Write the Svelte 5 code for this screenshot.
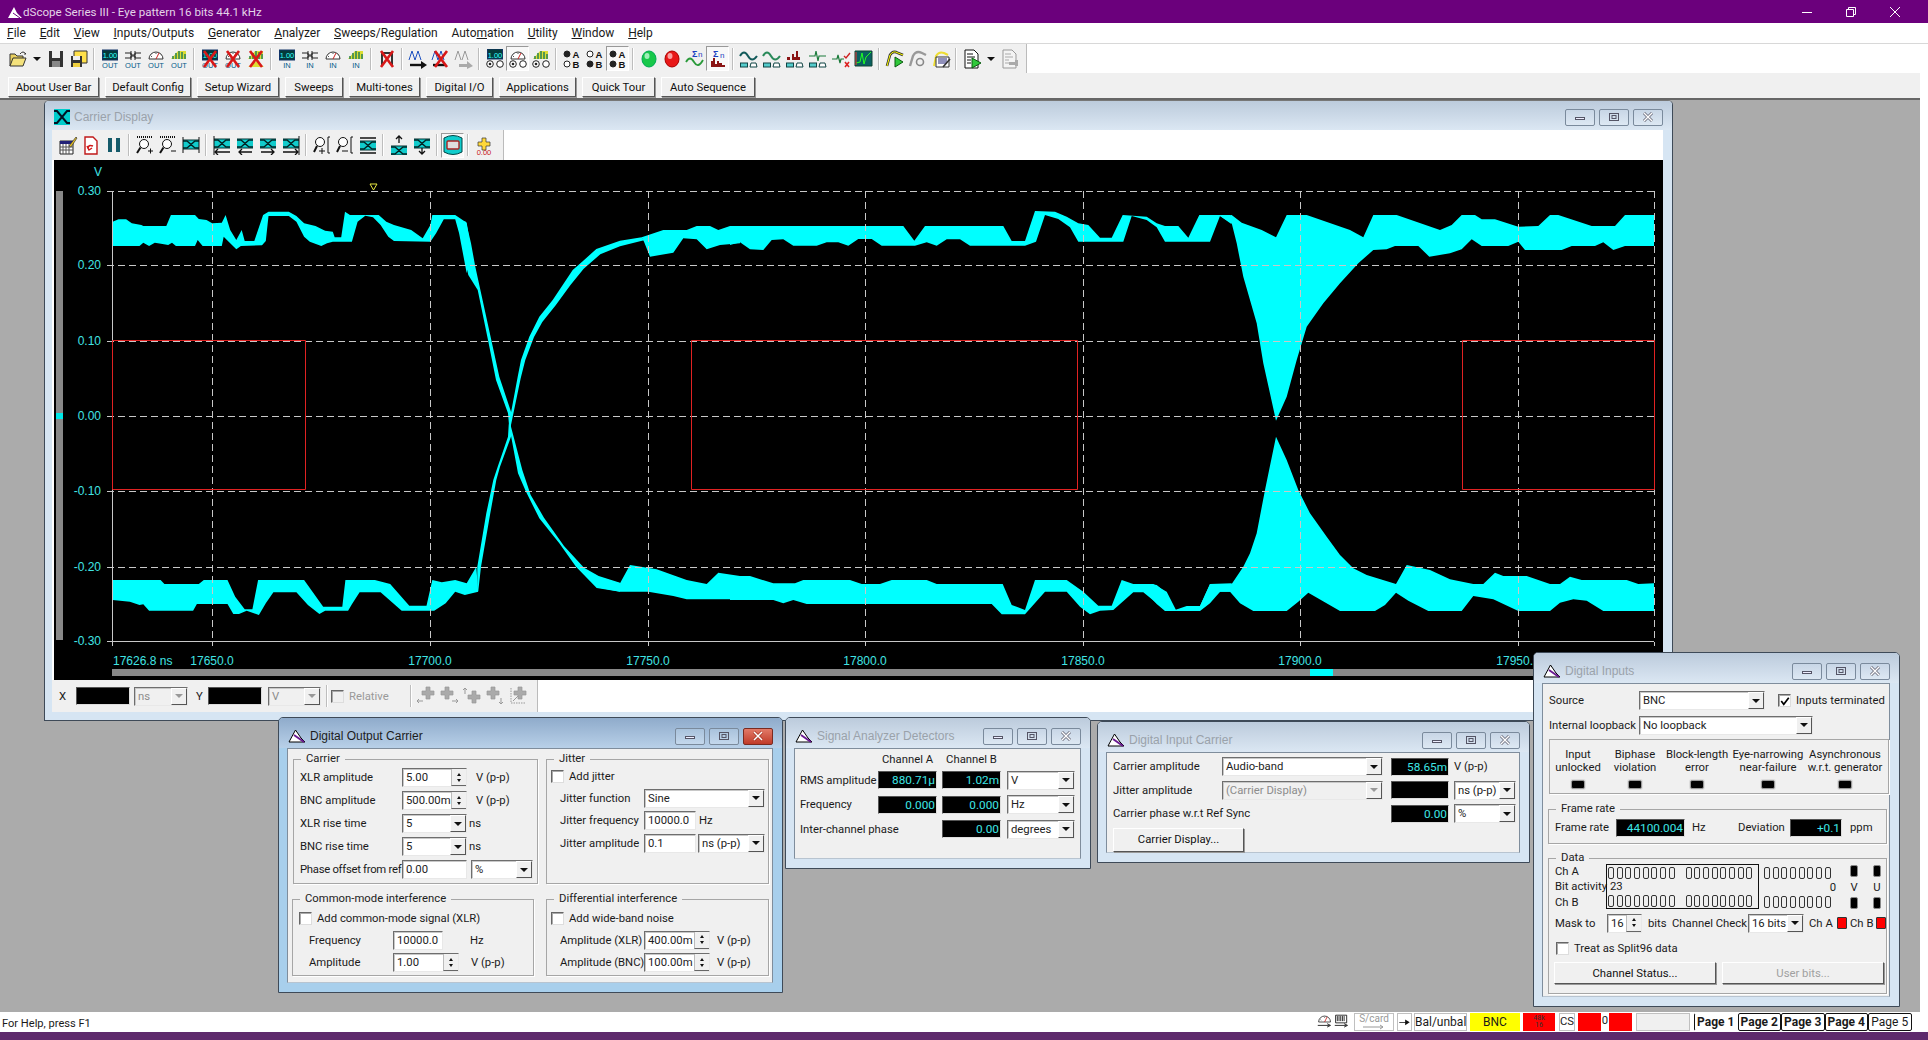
<script>
  const menus = [['F','ile'],['E','dit'],['V','iew'],['I','nputs/Outputs'],['G','enerator'],['A','nalyzer'],['S','weeps/Regulation'],['Auto','m','ation'],['U','tility'],['W','indow'],['H','elp']];
  const userBar = [['About User Bar','u91'],['Default Config','u86'],['Setup Wizard','u82'],['Sweeps','u58'],['Multi-tones','u71'],['Digital I/O','u67'],['Applications','u77'],['Quick Tour','u73'],['Auto Sequence','u94']];

  const F = 'font-family="Liberation Sans"';
  const lbl = (s, c = '#035a8a') => `<text x="10" y="19" font-size="7.5" text-anchor="middle" ${F} fill="${c}">${s}</text>`;
  const disp = `<rect x="2.5" y="1" width="15" height="10" fill="#043a3a" stroke="#136"/><text x="10" y="9" font-size="7.5" text-anchor="middle" ${F} fill="#3ff">1.00</text>`;
  const conn = `<path d="M2 4h6v2h4V4h6M2 9h6V7h4v2h6M8 2v9M12 2v9" fill="none" stroke="#222"/>`;
  const gauge = `<path d="M3 10a7 7 0 0 1 14 0z" fill="#fff" stroke="#333"/><path d="M10 10l3-6" stroke="#c22"/><path d="M5 7l1 1M10 4v1" stroke="#555"/>`;
  const multi = `<path d="M2 10L9 2l8 0v8z" fill="#dd3"/><path d="M4 10V7M7 10V4M10 10V2M13 10V3M16 10V5" stroke="#385" stroke-width="1.6"/>`;
  const X = `<path d="M4 2l12 16M16 2L4 18" stroke="#d81818" stroke-width="2.6"/>`;
  const circ = `<circle cx="5" cy="15" r="3.3" fill="#fff" stroke="#222"/><circle cx="15" cy="15" r="3.3" fill="#fff" stroke="#222"/><circle cx="5" cy="15" r="1.3" fill="#222"/>`;
  const wave = (c) => `<path d="M1 7q4-7 8 0t9 0" fill="none" stroke="${c}" stroke-width="2"/><rect x="1.5" y="14" width="7" height="4" fill="#5cc" stroke="#144"/><path d="M11 18l1-4h5l1 4z" fill="#fff" stroke="#144"/>`;
  const ab = (a, b) => `<circle cx="5" cy="5" r="3" fill="${a}" stroke="#222"/><circle cx="5" cy="15" r="3" fill="${b}" stroke="#222"/><text x="14" y="9" font-size="9.5" font-weight="700" text-anchor="middle" ${F} fill="#111">A</text><text x="14" y="19" font-size="9.5" font-weight="700" text-anchor="middle" ${F} fill="#111">B</text>`;
  const eye = `<path d="M2 4h16v9H2z" fill="#1cc"/><path d="M2 5h4l8 7h4M2 12h4l8-7h4" fill="none" stroke="#022" stroke-width="1.3"/><path d="M2 4h16M2 13h16" stroke="#033"/>`;
  const arrow = (d) => `<path d="${d}" fill="none" stroke="#111" stroke-width="1.3"/>`;
  const plus = (c) => `<path d="M8 3h4v4h4v4h-4v4H8v-4H4V7h4z" fill="${c}" stroke="${c === '#ffd83a' ? '#333' : '#999'}" stroke-width=".7"/>`;

  const ICON = {
    open: `<path d="M2 17V5h5l2 2h6v3" fill="#e8d060" stroke="#333"/><path d="M2 17l3-8h13l-3 8z" fill="#f4e27c" stroke="#333"/><path d="M12 5q3-4 6 0l-2 0" fill="none" stroke="#333"/>`,
    save: `<path d="M3 2h14v16H3z" fill="#333"/><path d="M6 2h8v7H6z" fill="#eee"/><path d="M6 12h8v6H6z" fill="#888"/>`,
    saveas: `<path d="M5 2h13v12H5z" fill="#ffe04a" stroke="#333"/><path d="M2 7h11v11H2z" fill="#333"/><path d="M4 7h7v4H4z" fill="#eee"/><path d="M4 14h7v4H4z" fill="#f0d040"/>`,
    o1: disp + lbl('OUT'), o2: conn + lbl('OUT'), o3: gauge + lbl('OUT'), o4: multi + lbl('OUT'),
    x1: disp + lbl('OUT') + X, x2: gauge + lbl('OUT') + X, x3: multi + `<path d="M2 18l9-6 7 6z" fill="#dd3"/>` + X,
    i1: disp + lbl('IN'), i2: conn + lbl('IN'), i3: gauge + lbl('IN'), i4: multi + lbl('IN'),
    xx: `<path d="M5 17V4h10v13" fill="none" stroke="#333" stroke-width="2"/>` + X,
    wa: `<path d="M1 11l3-9 3 9 3-9 3 9" fill="none" stroke="#1a4fc0"/><path d="M2 16h12" stroke="#111" stroke-width="2.4"/><path d="M13 12l6 4-6 4z" fill="#111"/>`,
    wx: `<path d="M1 11l3-9 3 9 3-9 3 9" fill="none" stroke="#1a4fc0"/><path d="M2 16h12" stroke="#111" stroke-width="2.4"/>` + X,
    wg: `<path d="M1 11l3-9 3 9M8 11l3-9 3 9" fill="none" stroke="#999"/><path d="M5 15h8v-3l6 5-6 3v-2H5z" fill="#aaa"/>`,
    c1: disp.replace('y="1"', 'y="0"') + circ, c2: gauge + circ, c3: multi + circ,
    ab1: ab('#222', '#fff'), ab2: ab('#fff', '#222'), ab3: ab('#222', '#222'),
    green: `<ellipse cx="10" cy="10" rx="7" ry="8" fill="#18c84a" stroke="#0a5"/><ellipse cx="8" cy="7" rx="2.5" ry="3" fill="#9fefb8"/>`,
    red: `<ellipse cx="10" cy="10" rx="7" ry="8" fill="#e81818" stroke="#a00"/><ellipse cx="8" cy="7" rx="2.5" ry="3" fill="#f9a0a0"/>`,
    sg: `<text x="7" y="8" font-size="9" font-weight="700" ${F} fill="#1a3fc0">Σ</text><path d="M1 13q4-7 8 0t9-2" fill="none" stroke="#2a9a3a" stroke-width="1.8"/><text x="13" y="8" font-size="8" ${F} fill="#1a3fc0">n</text>`,
    sb: `<text x="5" y="8" font-size="9" font-weight="700" ${F} fill="#1a3fc0">Σ</text><text x="12" y="9" font-size="8" ${F} fill="#1a3fc0">n</text><path d="M3 18V12h2v-3h2v6h2v-3h2v2h3v2h3v2z" fill="#8a1414"/>`,
    s1: wave('#125a5a'), s2: wave('#2a8a5a'),
    s3: `<path d="M2 11v-3h3v3h2V5h2v3h2V2h2v6h2v3h3" fill="#8a1414"/><rect x="1.5" y="14" width="7" height="4" fill="#5cc" stroke="#144"/><path d="M11 18l1-4h5l1 4z" fill="#fff" stroke="#144"/>`,
    s4: `<path d="M1 7h6l1-5 2 10 1-5h7" fill="none" stroke="#1a7a3a" stroke-width="1.2"/><rect x="1.5" y="14" width="7" height="4" fill="#5cc" stroke="#144"/><path d="M11 18l1-4h5l1 4z" fill="#fff" stroke="#144"/>`,
    s5: `<path d="M1 10h5l1-4 2 8 1-4h3" fill="none" stroke="#1a7a3a" stroke-width="1.2"/><path d="M13 7l2 2 4-5" fill="none" stroke="#c22" stroke-width="1.4"/><path d="M14 13l4 5M18 13l-4 5" stroke="#d22" stroke-width="1.6"/>`,
    scope: `<path d="M1 2h17v15H1z" fill="#0a6060" stroke="#143"/><path d="M2 14l4-1 2-9 2 11 2-7 5-5" fill="none" stroke="#2f2" /><path d="M2 3v13" stroke="#e33"/>`,
    play: `<path d="M2 17l3-11q3-5 8-2l5 2" fill="none" stroke="#333" stroke-width="2.6"/><path d="M2 17l3-11q3-5 8-2l5 2" fill="none" stroke="#ff0" stroke-width="1"/><path d="M10 8l8 5-8 5z" fill="#2fc83a" stroke="#0a5a10"/>`,
    rec: `<path d="M2 17l3-10q3-6 9-3l4 2" fill="none" stroke="#999" stroke-width="2.4"/><circle cx="12" cy="13" r="3.5" fill="none" stroke="#888" stroke-width="1.6"/>`,
    edit: `<path d="M3 17l2-10q3-5 8-3l4 2" fill="none" stroke="#ed3" stroke-width="2"/><path d="M5 8h13v10H5z" fill="#fff" stroke="#333"/><path d="M7 10h9M7 12h9M7 14h9" stroke="#227"/><path d="M12 18l7-8" stroke="#333" stroke-width="1.6"/>`,
    doc: `<path d="M3 1h9l4 4v14H3z" fill="#fff" stroke="#111"/><path d="M5 5h6M5 8h8M5 11h4M5 14h4" stroke="#111"/><path d="M10 9l9 5-9 5z" fill="#2fc83a" stroke="#0a5a10"/>`,
    docg: `<path d="M3 1h9l4 4v14H3z" fill="#f4f4f4" stroke="#999"/><path d="M5 5h6M5 8h8M5 11h4M5 14h4" stroke="#aaa"/><path d="M9 13h6v-2h3v6h-3v-1H9z" fill="#aaa"/>`,
    table: `<path d="M2 6h13v13H2z" fill="#fff" stroke="#222"/><path d="M2 6h13v3H2z" fill="#227"/><path d="M5 9v10M8 9v10M11 9v10M2 12h13M2 15h13" stroke="#555"/><path d="M11 11l7-9 1 1-6 9z" fill="#e7c020" stroke="#333" stroke-width=".7"/>`,
    rdoc: `<path d="M4 2h8l4 4v13H4z" fill="#fff" stroke="#c01818" stroke-width="1.4"/><path d="M7 14q0-5 5-3M6 11l2 4 3-2" fill="none" stroke="#d01818" stroke-width="1.5"/>`,
    pause: `<path d="M4 3h4v14H4zM12 3h4v14h-4z" fill="#155a6a"/>`,
    zi: `<path d="M2 2h16" stroke="#111" stroke-dasharray="1 1" stroke-width="2"/><circle cx="9" cy="9" r="4.5" fill="#fff" stroke="#111"/><path d="M5.5 12.5L2 18" stroke="#111" stroke-width="2"/><path d="M13 16h5M15.5 13.5v5" stroke="#111"/>`,
    zo: `<path d="M2 2h16" stroke="#111" stroke-dasharray="1 1" stroke-width="2"/><circle cx="9" cy="9" r="4.5" fill="#fff" stroke="#111"/><path d="M5.5 12.5L2 18" stroke="#111" stroke-width="2"/><path d="M13 16h5" stroke="#111"/>`,
    ebar: `<g transform="translate(0 1)">${eye}</g><path d="M2 2v16M18 2v16" stroke="#111"/>`,
    el2: eye + arrow('M18 17H3M6 14l-3 3 3 3') + `<path d="M2 1v19" stroke="#111"/>`,
    el: eye + arrow('M17 17H4M7 14l-3 3 3 3'),
    er: eye + arrow('M3 17h13M13 14l3 3-3 3'),
    er2: eye + arrow('M2 17h15M14 14l3 3-3 3') + `<path d="M18 1v19" stroke="#111"/>`,
    mp: `<circle cx="8" cy="7" r="4.5" fill="#fff" stroke="#111"/><path d="M5 11l-3 6" stroke="#111" stroke-width="2"/><path d="M7 16h6M10 13v6" stroke="#111"/><path d="M18 2h-2v16h2" fill="none" stroke="#111"/>`,
    mm: `<circle cx="8" cy="7" r="4.5" fill="#fff" stroke="#111"/><path d="M5 11l-3 6" stroke="#111" stroke-width="2"/><path d="M7 16h6" stroke="#111"/><path d="M18 2h-2v16h2" fill="none" stroke="#111"/>`,
    eh: `<g transform="translate(0 2)">${eye}</g><path d="M2 3h16M2 18h16" stroke="#111" stroke-width="1.4"/>`,
    eu: `<g transform="translate(0 7)">${eye}</g>` + arrow('M10 8V1M7 4l3-3 3 3'),
    ed: eye + arrow('M10 13v6M7 16l3 3 3-3'),
    ebox: `<path d="M1 3q9-5 18 0v14q-9 5-18 0z" fill="#1cc" stroke="#044"/><rect x="4" y="6" width="12" height="8" rx="1" fill="#ddd" stroke="#a22" stroke-width="1.4"/>`,
    cross: plus('#ffd83a') + `<text x="10" y="19.5" font-size="7.5" text-anchor="middle" ${F} fill="#c81818">0.00</text>`,
    g1: `<g transform="translate(2 -2)">${plus('#aaa')}</g><path d="M1 15h6M3 13l-2 2 2 2" fill="none" stroke="#999"/>`,
    g2: `<g transform="translate(-2 -2)">${plus('#aaa')}</g><path d="M13 15h6M17 13l2 2-2 2" fill="none" stroke="#999"/>`,
    g3: `<g transform="translate(2 2)">${plus('#aaa')}</g><path d="M3 8V2M1 4l2-2 2 2" fill="none" stroke="#999"/>`,
    g4: `<g transform="translate(-2 -2)">${plus('#aaa')}</g><path d="M16 12v6M14 16l2 2 2-2" fill="none" stroke="#999"/>`,
    g5: `<g transform="translate(2 -2)">${plus('#aaa')}</g><path d="M3 2v15h15" fill="none" stroke="#999" stroke-dasharray="1.5 1"/><path d="M5 15l5-5" stroke="#999"/>`,
    tg: gauge + `<path d="M2 14h14M13 12l4 2-4 2" fill="none" stroke="#111"/>`,
    tm: `<path d="M3 2h13v9H3z" fill="#fff" stroke="#111"/><path d="M5 3v6M7 3v6M9 3v6M11 3v6M13 3v6" stroke="#111"/><path d="M2 14h14M13 12l4 2-4 2" fill="none" stroke="#111"/>`,
    ar: `<path d="M2 10h9V6l7 4.500-7 4.500v-4H2z" fill="#111"/>`
  };

  const mainTools = ['open','dd','save','saveas','|','o1','o2','o3','o4','|','x1','x2','x3','|','i1','i2','i3','i4','|','xx','|','wa','wx','wg','|','c1','c2*','c3','|','ab1','ab2','ab3*','|','green','red','sg','sb*','|','s1','s2','s3','s4','s5','scope','|','play','rec','edit','|','doc','dd','docg'];
  const chartTools = ['table','rdoc','pause','|','zi','zo','ebar','|','el2','el','er','er2','|','mp','mm','eh','|','eu','ed','|','ebox*','|','cross'];
  const cursorTools = ['g1','g2','g3','g4','g5'];

  const waves = [
    [40,100,2.613,3,'190,365 205,358 225,358 240,370 265,375 270,378 330,378 342,345 405,345 415,357 435,360 450,370 475,368 485,345 497,390 513,420 527,390 535,423 560,423 583,345 597,335 650,335 670,348 690,370 720,378 745,392 765,395 770,412 787,412 797,335 810,345 885,345 905,365 925,375 970,390 1000,415 1020,375 1025,345 1085,345 1115,368 1125,440 1115,520 1095,400 1085,358 1055,358 1035,400 1020,425 925,423 910,410 890,375 870,352 850,347 830,365 815,425 765,425 750,430 735,438 705,425 690,410 670,365 650,348 597,348 590,423 580,436 525,438 513,448 497,430 480,410 475,438 425,438 412,420 405,438 355,438 345,428 335,435 320,432 300,428 285,438 270,428 260,438 190,438'],
    [440,180,3,3,'48,118 62,170 78,255 85,285 113,330 144,480 168,600 204,700 207,735 234,880 258,935 298,1015 358,1090 408,1160 470,1224 540,1235 540,1208 476,1188 432,1163 372,1098 312,1013 272,945 247,870 213,740 213,695 178,590 154,480 120,325 106,260 93,190 78,125'],
    [440,180,3,3,'112,1235 112,1160 139,1000 160,900 173,860 204,770 206,735 233,590 243,540 268,470 298,410 338,360 398,270 428,244 469,207 540,182 605,172 612,181 540,199 481,223 431,266 391,316 347,376 307,426 282,471 256,540 242,595 213,735 213,770 180,860 169,900 151,1000 123,1160 115,1232'],
    [440,180,3,3,'605,172 670,150 740,150 770,138 810,138 835,150 870,138 900,138 900,190 840,195 800,208 770,178 730,175 700,218 630,230 612,185'],
    [440,180,3,3,'475,1190 540,1210 570,1155 650,1168 740,1200 800,1212 835,1178 900,1188 900,1258 740,1258 700,1248 625,1235 540,1235 470,1222'],
    [730,190,3,3,'0,108 520,108 553,152 585,108 820,108 845,153 885,153 915,63 975,65 1010,80 1045,100 1075,105 1110,143 1145,143 1178,75 1250,80 1280,100 1305,108 1345,108 1375,143 1408,75 1500,75 1505,103 1470,78 1440,155 1305,155 1280,112 1250,90 1205,78 1180,155 1045,155 1020,112 985,87 945,75 918,155 885,167 720,167 690,148 650,148 620,167 590,157 555,167 455,167 425,147 385,147 355,167 325,157 290,157 260,167 190,167 160,148 125,150 100,180 60,178 30,157 0,165'],
    [1150,180,3,3,'245,105 275,128 335,150 378,172 410,105 470,105 600,150 640,172 670,105 740,105 870,150 905,135 935,105 975,105 995,118 1035,118 1105,140 1165,138 1200,105 1225,105 1325,138 1395,138 1425,105 1512,105 1512,198 1425,198 1390,210 1360,187 1335,198 1265,198 1235,210 1125,210 1105,185 1075,198 995,198 965,178 935,208 900,220 838,230 805,198 735,198 710,208 670,210 625,250 570,310 520,370 470,440 440,540 410,650 378,722 340,550 320,430 280,290 260,190 245,130 210,108'],
    [1150,180,3,3,'378,770 345,930 320,1060 300,1120 280,1160 245,1212 180,1212 150,1278 110,1278 75,1290 45,1235 20,1215 0,1212 0,1250 20,1272 45,1293 150,1293 180,1270 210,1235 240,1235 270,1270 310,1293 410,1293 445,1265 475,1238 570,1293 675,1293 705,1275 738,1238 775,1262 835,1293 935,1293 970,1248 1030,1258 1105,1293 1200,1293 1230,1268 1270,1258 1310,1262 1360,1293 1512,1293 1512,1210 1465,1212 1430,1200 1295,1200 1260,1190 1230,1212 1200,1212 1130,1188 1060,1188 1035,1178 1000,1212 970,1212 900,1198 840,1170 770,1155 738,1212 650,1185 610,1165 570,1125 530,1070 480,1000 445,930 410,840'],
    [730,550,3,3,'0,78 60,78 130,100 195,100 220,90 360,90 395,102 450,102 485,90 590,90 620,102 818,102 845,165 885,180 915,90 1010,90 1060,125 1105,167 1145,167 1175,90 1210,102 1270,102 1310,125 1338,180 1410,168 1440,102 1505,100 1505,125 1470,125 1410,180 1305,180 1240,127 1210,127 1150,180 1110,182 1080,193 1050,170 1010,125 945,125 885,193 815,193 785,162 230,162 190,150 160,160 130,150 0,150'],
    [40,540,2.613,3,'190,120 315,120 325,132 415,132 428,120 490,120 510,170 535,208 555,208 570,120 690,120 740,200 790,200 798,120 875,120 915,132 965,197 1010,197 1025,120 1050,127 1085,120 1115,130 1140,80 1145,155 1110,165 1085,155 1060,190 1030,212 945,212 890,157 835,157 815,193 805,212 745,212 730,222 700,195 670,157 610,157 590,190 572,225 540,212 520,222 505,222 490,192 410,192 400,212 285,212 270,193 260,195 235,185 190,180']
  ].map(([ox, oy, sx, sy, p]) => p.split(' ').map((s) => { const [x, y] = s.split(','); return `${(ox + x / sx).toFixed(1)},${(oy + y / sy).toFixed(1)}`; }).join(' '));

  const yTicks = [['0.30',191],['0.20',265],['0.10',341],['0.00',416],['-0.10',491],['-0.20',567],['-0.30',641]];
  const xTicks = [['17650.0',212],['17700.0',430],['17750.0',648],['17800.0',865],['17850.0',1083],['17900.0',1300],['17950.0',1518]];
  const redBoxes = [[112.5,305.5],[691.5,1077.5],[1462.5,1654.5]];
  const indicators = [['Input','unlocked'],['Biphase','violation'],['Block-length','error'],['Eye-narrowing','near-failure'],['Asynchronous','w.r.t. generator']];
  const eight = [0,1,2,3,4,5,6,7];
</script>

{#snippet icon(name)}
  <svg class="ic" viewBox="0 0 20 20" width="20" height="20">{@html ICON[name]}</svg>
{/snippet}

{#snippet tools(list)}
  {#each list as t}
    {#if t === '|'}<span class="sep"></span>
    {:else if t === 'dd'}<span class="dd"><i></i></span>
    {:else}<span class="tb" class:down={t.endsWith('*')}>{@render icon(t.replace('*', ''))}</span>{/if}
  {/each}
{/snippet}

{#snippet tri()}
  <svg class="tri" viewBox="0 0 18 14" width="18" height="14"><path d="M1 13L7.500 1 13 9l4 4z" fill="#fff" stroke="#000"/><path d="M6 6l10 7" stroke="#6a1a90" stroke-width="2"/></svg>
{/snippet}

{#snippet caption(title, active)}
  <div class="cap" class:active>
    {#if title === 'Carrier Display'}
      <svg class="tri" viewBox="0 0 16 16" width="16" height="16"><rect width="16" height="16" fill="#0cc"/><path d="M0 2h3l10 12h3M0 14h3L13 2h3" fill="none" stroke="#012" stroke-width="2"/></svg>
    {:else}
      {@render tri()}
    {/if}
    <span class="ttl">{title}</span>
    <span class="cbtn"><svg viewBox="0 0 12 10" width="12" height="10"><rect x="1.500" y="5.500" width="9" height="2" fill="#eef" stroke="#556"/></svg></span>
    <span class="cbtn"><svg viewBox="0 0 12 10" width="12" height="10"><rect x="1.500" y="1.500" width="9" height="7" fill="none" stroke="#556"/><rect x="4" y="3.500" width="4" height="3" fill="none" stroke="#556"/></svg></span>
    <span class="cbtn close"><svg viewBox="0 0 12 10" width="12" height="10"><path d="M2 1l8 8M10 1l-8 8" stroke={active ? '#a03020' : '#556'} stroke-width="2.800"/><path d="M2 1l8 8M10 1l-8 8" stroke="#fff" stroke-width="1.500"/></svg></span>
  </div>
{/snippet}

{#snippet fld(v, w)}<span class="fld {w}">{v}</span>{/snippet}
{#snippet spin(v, w)}<span class="fld {w}">{v}<span class="spn"><i class="up"></i><i class="dn"></i></span></span>{/snippet}
{#snippet combo(v, w, off)}<span class="fld combo {w}" class:off>{v}<span class="drop"><i></i></span></span>{/snippet}
{#snippet meter(v, w)}<span class="meter {w}">{v}</span>{/snippet}
{#snippet check(text, on, cl)}<span class="chk {cl}"><span class="box">{#if on}<svg viewBox="0 0 12 12" width="10" height="10"><path d="M1.500 6l3 4 6-8" fill="none" stroke="#000" stroke-width="2"/></svg>{/if}</span>{text}</span>{/snippet}
{#snippet bits()}{#each eight as _}<span class="bit"></span>{/each}{/snippet}

<div class="screen">
  <header class="titlebar">
    <svg viewBox="0 0 16 14" width="16" height="14"><path d="M1 13L7 2l3 6 5 5z" fill="#fff"/><path d="M6 8l7 5" stroke="#6a0080"/></svg>
    <span class="apptitle">dScope Series III - Eye pattern 16 bits 44.1 kHz</span>
    <span class="wbtns">
      <svg viewBox="0 0 12 12" width="12" height="12"><path d="M1 6.500h10" stroke="#fff"/></svg>
      <svg viewBox="0 0 12 12" width="12" height="12"><path d="M1.500 3.500h7v7h-7zM3.500 3V1.500h7v7H9" fill="none" stroke="#fff"/></svg>
      <svg viewBox="0 0 12 12" width="12" height="12"><path d="M1 1l10 10M11 1L1 11" stroke="#fff"/></svg>
    </span>
  </header>

  <nav class="menubar">
    {#each menus as m}
      {#if m.length === 3}<span>{m[0]}<u>{m[1]}</u>{m[2]}</span>{:else}<span><u>{m[0]}</u>{m[1]}</span>{/if}
    {/each}
  </nav>

  <div class="toolrow"><div class="toolbar main">{@render tools(mainTools)}</div></div>

  <div class="userbar">
    {#each userBar as [t, w]}<button class="btn {w}">{t}</button>{/each}
  </div>

  <main class="desktop">
    <section class="win carrier">
      {@render caption('Carrier Display', false)}
      <div class="client cclient">
        <div class="toolrow thin"><div class="toolbar chartbar">{@render tools(chartTools)}</div></div>
        <div class="chart">
          <svg viewBox="54 160 1609 520" width="1609" height="520">
            {#each waves as p}<polygon points={p} fill="#00ffff" />{/each}
            {#each yTicks as [t, y]}
              {#if t === '-0.30'}
                <line x1="107" x2="1654" y1={y + 0.5} y2={y + 0.5} stroke="#c8c8c8" />
              {:else}
                <line x1="107" x2="1654" y1={y + 0.5} y2={y + 0.5} stroke="#c8c8c8" stroke-dasharray="7 4" />
              {/if}
              <text x="101" y={y + 4} class="ax" text-anchor="end">{t}</text>
            {/each}
            <line x1="112.500" x2="112.500" y1="191" y2="646" stroke="#c8c8c8" />
            <line x1="1654.500" x2="1654.500" y1="191" y2="646" stroke="#c8c8c8" stroke-dasharray="7 4" />
            {#each xTicks as [t, x]}
              <line x1={x + 0.5} x2={x + 0.5} y1="191" y2="646" stroke="#c8c8c8" stroke-dasharray="7 4" />
              <text x={x} y="665" class="ax" text-anchor="middle">{t}</text>
            {/each}
            <text x="113" y="665" class="ax">17626.8 ns</text>
            <text x="98" y="176" class="ax" text-anchor="middle">V</text>
            {#each redBoxes as [a, b]}
              <path d="M{a} 340.500H{b}V489.500H{a}Z" fill="none" stroke="#e02222" />
            {/each}
            <path d="M370 184h7l-3.500 6z" fill="none" stroke="#e8e840" />
            <rect x="56" y="191" width="7" height="449" fill="#888" />
            <rect x="56" y="413" width="7" height="6" fill="#00e8e8" />
            <rect x="112" y="669" width="1551" height="7" fill="#888" />
            <rect x="1310" y="669" width="23" height="7" fill="#00ffff" />
          </svg>
        </div>
        <div class="cursorrow">
          <div class="cursorbar">
            <span class="cl x">X</span><span class="meter w54"></span>
            <span class="wrapc">{@render combo('ns', 'w54', true)}</span>
            <span class="cl y">Y</span><span class="meter w54"></span>
            <span class="wrapc c2">{@render combo('V', 'w53', true)}</span>
            <span class="sep"></span>
            {@render check('Relative', false, 'off relw')}
            <span class="sep wide"></span>
            <span class="gicons">{@render tools(cursorTools)}</span>
          </div>
        </div>
      </div>
    </section>

    <section class="win output act">
      {@render caption('Digital Output Carrier', true)}
      <div class="client outc">
        <fieldset class="grp g-carrier">
          <legend>Carrier</legend>
          <div class="row"><span class="lab l102">XLR amplitude</span>{@render spin('5.00', 'w65')}<span class="unit m9">V (p-p)</span></div>
          <div class="row"><span class="lab l102">BNC amplitude</span>{@render spin('500.00m', 'w65')}<span class="unit m9">V (p-p)</span></div>
          <div class="row"><span class="lab l102">XLR rise time</span>{@render combo('5', 'w65')}<span class="unit m2">ns</span></div>
          <div class="row"><span class="lab l102">BNC rise time</span>{@render combo('5', 'w65')}<span class="unit m2">ns</span></div>
          <div class="row"><span class="lab l102 squeeze">Phase offset from ref</span>{@render fld('0.00', 'w65')}<span class="gap4"></span>{@render combo('%', 'w62')}</div>
        </fieldset>
        <fieldset class="grp g-jitter">
          <legend>Jitter</legend>
          <div class="row r21 tight">{@render check('Add jitter', false)}</div>
          <div class="row r22 ind"><span class="lab l84">Jitter function</span>{@render combo('Sine', 'w121')}</div>
          <div class="row r22 ind"><span class="lab l84">Jitter frequency</span>{@render fld('10000.0', 'w52')}<span class="unit m3">Hz</span></div>
          <div class="row r22 ind"><span class="lab l84">Jitter amplitude</span>{@render fld('0.1', 'w52')}<span class="gap2"></span>{@render combo('ns (p-p)', 'w67')}</div>
        </fieldset>
        <fieldset class="grp g-common">
          <legend>Common-mode interference</legend>
          <div class="row r21">{@render check('Add common-mode signal (XLR)', false)}</div>
          <div class="row r22 ind ind2"><span class="lab l84">Frequency</span>{@render fld('10000.0', 'w50')}<span class="unit m27">Hz</span></div>
          <div class="row r22 ind ind2"><span class="lab l84">Amplitude</span>{@render spin('1.00', 'w66')}<span class="unit m12">V (p-p)</span></div>
        </fieldset>
        <fieldset class="grp g-diff">
          <legend>Differential interference</legend>
          <div class="row r21 tight">{@render check('Add wide-band noise', false)}</div>
          <div class="row r22 ind"><span class="lab l84">Amplitude (XLR)</span>{@render spin('400.00m', 'w66')}<span class="unit m7">V (p-p)</span></div>
          <div class="row r22 ind"><span class="lab l84">Amplitude (BNC)</span>{@render spin('100.00m', 'w66')}<span class="unit m7">V (p-p)</span></div>
        </fieldset>
      </div>
    </section>

    <section class="win detectors">
      {@render caption('Signal Analyzer Detectors', false)}
      <div class="client detc">
        <div class="drow head"><span class="lab l78"></span><span class="chn">Channel A</span><span class="chn">Channel B</span></div>
        <div class="drow"><span class="lab l78">RMS amplitude</span>{@render meter('880.71µ', 'w59')}<span class="gap5"></span>{@render meter('1.02m', 'w59')}<span class="gap6"></span>{@render combo('V', 'w68')}</div>
        <div class="drow"><span class="lab l78">Frequency</span>{@render meter('0.000', 'w59')}<span class="gap5"></span>{@render meter('0.000', 'w59')}<span class="gap6"></span>{@render combo('Hz', 'w68')}</div>
        <div class="drow"><span class="lab l142">Inter-channel phase</span>{@render meter('0.00', 'w59')}<span class="gap6"></span>{@render combo('degrees', 'w68')}</div>
      </div>
    </section>

    <section class="win dicarrier">
      {@render caption('Digital Input Carrier', false)}
      <div class="client dic">
        <div class="drow d2"><span class="lab l109">Carrier amplitude</span>{@render combo('Audio-band', 'w161')}<span class="gap8"></span>{@render meter('58.65m', 'w58')}<span class="unit m5">V (p-p)</span></div>
        <div class="drow d2"><span class="lab l109">Jitter amplitude</span>{@render combo('(Carrier Display)', 'w161', true)}<span class="gap8"></span>{@render meter('', 'w58')}<span class="gap5"></span>{@render combo('ns (p-p)', 'w62')}</div>
        <div class="drow d2"><span class="lab l278">Carrier phase w.r.t Ref Sync</span>{@render meter('0.00', 'w58')}<span class="gap5"></span>{@render combo('%', 'w62')}</div>
        <button class="btn cdbtn">Carrier Display...</button>
      </div>
    </section>

    <section class="win inputs">
      {@render caption('Digital Inputs', false)}
      <div class="client inc">
        <div class="drow s1"><span class="lab l90">Source</span>{@render combo('BNC', 'w126')}<span class="gap13"></span>{@render check('Inputs terminated', true)}</div>
        <div class="drow s2"><span class="lab l90">Internal loopback</span>{@render combo('No loopback', 'w174')}</div>
        <div class="indbox">
          {#each indicators as [a, b]}
            <div class="indc"><span>{a}<br />{b}</span><i class="led"></i></div>
          {/each}
        </div>
        <fieldset class="grp g-rate">
          <legend>Frame rate</legend>
          <div class="drow ratew"><span class="lab l61">Frame rate</span>{@render meter('44100.004', 'w69')}<span class="unit m7 w46">Hz</span><span class="lab l52">Deviation</span>{@render meter('+0.1', 'w51')}<span class="unit m8">ppm</span></div>
        </fieldset>
        <fieldset class="grp g-data">
          <legend>Data</legend>
          <div class="dataflex">
            <div class="dlabels"><span>Ch A</span><span>Bit activity</span><span>Ch B</span></div>
            <div class="bitbox">
              <div class="bitrow">{@render bits()}<span class="bgap"></span>{@render bits()}</div>
              <div class="bitrow txt">23</div>
              <div class="bitrow">{@render bits()}<span class="bgap"></span>{@render bits()}</div>
            </div>
            <div class="bitout">
              <div class="bitrow">{@render bits()}</div>
              <div class="bitrow txt rt">0</div>
              <div class="bitrow">{@render bits()}</div>
            </div>
            <div class="vu"><i class="vled"></i><span>V</span><i class="vled"></i></div>
            <div class="vu"><i class="vled"></i><span>U</span><i class="vled"></i></div>
          </div>
          <div class="drow mask">
            <span class="lab l52">Mask to</span>{@render spin('16', 'w35')}<span class="unit mb">bits</span><span class="unit mc">Channel Check</span>{@render combo('16 bits', 'w56')}<span class="unit md">Ch A</span><i class="redled"></i><span class="unit me">Ch B</span><i class="redled"></i>
          </div>
          <div class="drow treat">{@render check('Treat as Split96 data', false)}</div>
          <div class="drow btns"><button class="btn cs">Channel Status...</button><button class="btn cs dis">User bits...</button></div>
        </fieldset>
      </div>
    </section>
  </main>

  <footer class="status">
    <span class="help">For Help, press F1</span>
    <span class="sicons">{@render icon('tg')}{@render icon('tm')}</span>
    <span class="sb scard"><span>S/card</span><svg viewBox="0 0 24 6" width="24" height="6"><path d="M1 3h20M18 1l3 2-3 2" fill="none" stroke="#999"/></svg></span>
    <span class="sb sarrow">{@render icon('ar')}</span>
    <span class="sb bal">Bal/unbal</span>
    <span class="sb bnc">BNC</span>
    <span class="sb rate"><span>48k</span><span>16</span></span>
    <span class="sb cs2">CS</span>
    <span class="sb zero"><i></i><span>0</span><i></i></span>
    <span class="sb empty"></span>
    <span class="page b first">Page 1</span><span class="page b">Page 2</span><span class="page b">Page 3</span><span class="page b">Page 4</span><span class="page">Page 5</span>
  </footer>
  <div class="strip"></div>
</div>

<style>
  :global(body) { margin: 0; background: #fff; }
  .screen { width: 1928px; height: 1040px; display: flex; flex-direction: column; overflow: hidden; font: 11.300px Roboto, "Liberation Sans", Arial, sans-serif; color: #1a1a1a; background: #fff; }
  i { display: block; font-style: normal; }

  .titlebar { height: 23px; flex: none; background: #6b007c; color: #e4d4e8; display: flex; align-items: center; padding-left: 7px; box-sizing: border-box; font-size: 11.600px; }
  .wbtns { margin-left: auto; display: flex; gap: 32px; margin-right: 27px; }
  .menubar { height: 20px; flex: none; display: flex; gap: 13.800px; padding-left: 7px; align-items: center; background: #fff; font-size: 12px; }
  .toolrow { height: 30px; flex: none; background: #fff; border-top: 1px solid #d8d8d8; box-sizing: border-box; display: flex; }
  .toolbar { display: flex; align-items: center; background: #f0f0f0; box-sizing: border-box; border-right: 1px solid #bbb; }
  .toolbar.main { padding-left: 6px; width: 1027px; }
  .toolrow.thin { height: 30px; border: 0; }
  .chartbar { padding-left: 4px; width: 452px; }
  .tb { width: 23px; height: 25px; display: flex; align-items: center; justify-content: center; box-sizing: border-box; flex: none; }
  .tb.down { background: #f8f8f8; border: 1px solid; border-color: #999 #fff #fff #999; }
  .ic { display: block; }
  .sep { width: 1px; height: 22px; background: #bdbdbd; margin: 0 4px 0 3px; flex: none; box-shadow: 1px 0 #fff; }
  .dd { width: 15px; height: 25px; display: flex; align-items: center; justify-content: center; flex: none; }
  .dd i { width: 0; height: 0; border: 4px solid transparent; border-top: 4px solid #111; border-bottom: 0; }

  .userbar { height: 27px; flex: none; display: flex; gap: 6px; padding: 4px 0 0 8px; box-sizing: border-box; background: #f0f0f0; border-bottom: 2px solid #666; margin-right: 8px; }
  .btn { height: 20px; padding: 0; font: inherit; color: #111; background: #f0f0f0; border: 1px solid; border-color: #fff #555 #555 #fff; box-shadow: 1px 1px 0 #999; box-sizing: border-box; flex: none; }
  .u91 { width: 91px; } .u86 { width: 86px; } .u82 { width: 82px; } .u58 { width: 58px; } .u71 { width: 71px; } .u67 { width: 67px; } .u77 { width: 77px; } .u73 { width: 73px; } .u94 { width: 94px; }

  .desktop { flex: 1; position: relative; background: #ababab; margin-right: 8px; }

  .win { position: absolute; display: flex; flex-direction: column; box-sizing: border-box; border: 1px solid #3e4a58; border-radius: 5px 5px 0 0; background: #d6e5f3; padding: 0 9px 9px 8px; }
  .win.act { background: #a8cfec; }
  .carrier { left: 44px; top: 0; width: 1629px; height: 621px; padding: 0 9px 8px 7px; background: #d6e5f3; border-top-color: #777; }
  .output { left: 278px; top: 617px; width: 505px; height: 276px; }
  .detectors { left: 785px; top: 617px; width: 306px; height: 152px; }
  .dicarrier { left: 1097px; top: 621px; width: 433px; height: 142px; }
  .inputs { left: 1533px; top: 552px; width: 367px; height: 355px; }

  .cap { height: 30px; flex: none; display: flex; align-items: center; margin: 0 -9px 0 -8px; padding: 6px 9px 0 9px; background: linear-gradient(#bccbdc, #dbe7f3); color: #9aa2aa; border-radius: 4px 4px 0 0; box-sizing: border-box; }
  .carrier .cap { height: 29px; padding-top: 3px; margin-left: -7px; padding-left: 9px; }
  .cap.active { background: linear-gradient(#8fabcb, #b8d0e8); color: #1c1c1c; }
  .tri { flex: none; margin-right: 4px; }
  .ttl { flex: 1; font: 12px "Liberation Sans", Arial, sans-serif; }
  .cbtn { width: 30px; height: 17px; margin-left: 4px; flex: none; display: flex; align-items: center; justify-content: center; box-sizing: border-box; border: 1px solid #7a8a9c; border-radius: 2px; background: linear-gradient(#c8d6e6, #dde8f3); }
  .active .cbtn { background: linear-gradient(#a9c2dc, #c4d8ec); }
  .active .cbtn.close { background: linear-gradient(#e27a68, #c03a28); border-color: #7a2a20; }

  .client { flex: 1; background: #f0f0f0; border: 1px solid #7f8d9c; border-bottom-color: #b8c4d0; box-sizing: border-box; min-height: 0; }
  .cclient { display: flex; flex-direction: column; background: #fff; border: 0; }
  .chart { height: 520px; flex: none; margin-left: 2px; background: #000; }
  .chart svg { display: block; }
  .ax { fill: #40e4e4; font: 12px "Liberation Sans", Arial, sans-serif; }
  .cursorrow { flex: 1; display: flex; background: #fff; }
  .cursorbar { width: 486px; display: flex; align-items: center; background: #f0f0f0; padding-left: 7px; border-right: 1px solid #bbb; box-sizing: border-box; }
  .cl { width: 17px; flex: none; }
  .cl.y { margin-left: 8px; width: 12px; }
  .wrapc { margin-left: 4px; display: flex; }
  .c2 { margin-left: 6px; }
  .cursorbar .sep { margin: 0 4px 0 5px; }
  .cursorbar .sep.wide { margin: 0 3px 0 0; }
  .relw { width: 79px; }
  .gicons { display: flex; }

  .fld { position: relative; display: inline-block; height: 19px; line-height: 18px; padding-left: 3px; box-sizing: border-box; background: #fff; border: 1px solid; border-color: #6e6e6e #e8e8e8 #e8e8e8 #6e6e6e; box-shadow: inset 1px 1px 0 #c8c8c8; white-space: nowrap; flex: none; color: #222; font-size: 11.300px; }
  .fld.off { background: #f0f0f0; color: #8c8c8c; }
  .spn { position: absolute; right: 0; top: 0; bottom: 0; width: 15px; background: #f0f0f0; border-left: 1px solid #bbb; border-bottom: 1px solid #666; display: flex; flex-direction: column; justify-content: space-around; align-items: center; padding: 2px 0; box-sizing: border-box; }
  .up { width: 0; height: 0; border: 2.500px solid transparent; border-bottom: 3px solid #111; border-top: 0; }
  .dn { width: 0; height: 0; border: 2.500px solid transparent; border-top: 3px solid #111; border-bottom: 0; }
  .drop { position: absolute; right: 0; top: 0; bottom: 0; width: 16px; background: #f0f0f0; border: 1px solid; border-color: #fff #555 #555 #fff; box-sizing: border-box; display: flex; align-items: center; justify-content: center; }
  .drop i { width: 0; height: 0; border: 4px solid transparent; border-top: 4px solid #111; border-bottom: 0; }
  .off .drop i { border-top-color: #999; }
  .meter { display: inline-block; height: 18px; line-height: 16px; text-align: right; padding-right: 1px; background: #000; color: #3ee6e6; box-sizing: border-box; border: 1px solid; border-color: #555 #ddd #ddd #555; flex: none; overflow: hidden; font-size: 11.800px; }

  .w35 { width: 35px; } .w50 { width: 50px; } .w51 { width: 52px; } .w52 { width: 52px; } .w53 { width: 53px; } .w54 { width: 54px; } .w56 { width: 56px; } .w58 { width: 58px; } .w59 { width: 59px; } .w62 { width: 62px; } .w65 { width: 65px; } .w66 { width: 66px; } .w67 { width: 67px; } .w68 { width: 68px; } .w69 { width: 69px; } .w121 { width: 121px; } .w126 { width: 126px; } .w161 { width: 161px; } .w174 { width: 174px; }

  .chk { display: inline-flex; align-items: center; gap: 5px; white-space: nowrap; flex: none; }
  .off { color: #999; }
  .box { width: 13px; height: 13px; box-sizing: border-box; background: #fff; border: 1px solid; border-color: #666 #ddd #ddd #666; box-shadow: inset 1px 1px 0 #aaa; display: flex; align-items: center; justify-content: center; flex: none; }
  .off .box { background: #f0f0f0; }

  fieldset.grp { margin: 0; padding: 0; border: 1px solid #a6a6a6; box-sizing: border-box; min-width: 0; box-shadow: 1px 1px 0 #fff; }
  legend { margin-left: 7px; padding: 0 5px; line-height: 14px; color: #222; }
  .row { display: flex; align-items: center; height: 23px; padding-left: 6px; }
  .r21 { height: 21px; }
  .r22 { height: 22.500px; }
  .tight { padding-left: 4px; }
  .ind { padding-left: 13px; }
  .ind2 { padding-left: 16px; }
  .g-common .r21, .g-diff .r21 { margin-top: 2px; }
  .lab { flex: none; white-space: nowrap; }
  .squeeze { letter-spacing: -.28px; }
  .l102 { width: 102px; } .l84 { width: 84px; } .l78 { width: 78px; } .l142 { width: 142px; } .l109 { width: 109px; } .l278 { width: 278px; } .l90 { width: 90px; } .l61 { width: 61px; } .l52 { width: 52px; }
  .unit { flex: none; white-space: nowrap; }
  .m2 { margin-left: 2px; } .m3 { margin-left: 3px; } .m5 { margin-left: 5px; } .m7 { margin-left: 7px; } .m8 { margin-left: 8px; } .m9 { margin-left: 9px; } .m12 { margin-left: 12px; } .m27 { margin-left: 27px; }
  .mb { margin-left: 6px; width: 24px; } .mc { width: 76px; } .md { margin-left: 5px; width: 28px; } .me { margin-left: 3px; width: 26px; }
  .gap2 { width: 2px; flex: none; } .gap4 { width: 4px; flex: none; } .gap5 { width: 5px; flex: none; } .gap6 { width: 6px; flex: none; } .gap8 { width: 8px; flex: none; } .gap13 { width: 13px; flex: none; }

  .outc { display: grid; grid-template-columns: 245px 223px; grid-template-rows: 132px 84px; column-gap: 8px; row-gap: 8px; padding: 3px 0 0 5px; }
  .g-common { width: 242px; margin-left: -1px !important; }

  .detc { padding: 2px 0 0 5px; }
  .drow { display: flex; align-items: center; height: 24.500px; }
  .drow.head { height: 17px; }
  .chn { width: 59px; margin-right: 5px; text-align: center; flex: none; }
  .dic { padding: 2px 0 0 6px; }
  .d2 { height: 23.500px; }
  .cdbtn { width: 131px; height: 24px; margin-top: 2px; display: block; }

  .inc { padding: 0 0 0 6px; }
  .s1 { height: 25px; margin-top: 4px; }
  .s2 { height: 24px; }
  .indbox { width: 340px; height: 55px; margin-top: 2px; box-sizing: border-box; border: 1px solid #a6a6a6; box-shadow: 1px 1px 0 #fff; display: grid; grid-template-columns: 56px 58px 66px 76px 78px; text-align: center; line-height: 13px; padding-top: 8px; }
  .indc { display: flex; flex-direction: column; align-items: center; white-space: nowrap; }
  .led { width: 12px; height: 7px; margin-top: 6px; background: #000; border: 1px solid #999; border-radius: 2px; box-sizing: content-box; box-shadow: 0 0 0 1px #ddd; }
  .g-rate { width: 339px; height: 42px; margin-top: 8px !important; margin-left: -1px !important; }
  .ratew { height: 23px; padding-left: 6px; }
  .w46 { width: 46px; }
  .g-data { width: 339px; height: 143px; margin-top: 7px !important; margin-left: -1px !important; }
  .dataflex { display: flex; padding-left: 6px; height: 46px; margin-top: -1px; }
  .dlabels { width: 51px; display: flex; flex-direction: column; justify-content: space-around; flex: none; white-space: nowrap; }
  .bitbox { width: 153px; height: 45px; box-sizing: border-box; border: 1px solid #111; flex: none; display: flex; flex-direction: column; justify-content: space-between; padding: 1px 0 1px 1px; }
  .bitout { width: 73px; margin-left: 5px; padding-top: 2px; box-sizing: border-box; display: flex; flex-direction: column; justify-content: space-between; height: 44px; flex: none; }
  .bitrow { display: flex; height: 13px; align-items: center; }
  .txt { padding-left: 2px; }
  .rt { justify-content: flex-end; padding-right: 1px; }
  .bit { width: 6px; height: 12px; box-sizing: border-box; border: 1px solid #333; border-radius: 2px; margin-right: 2.700px; flex: none; background: #eee; }
  .bgap { width: 8px; flex: none; }
  .vu { width: 12px; margin-left: 11px; height: 44px; display: flex; flex-direction: column; align-items: center; justify-content: space-between; flex: none; padding-top: 1px; }
  .vled { width: 8px; height: 12px; background: #000; border: 1px solid #888; border-radius: 2px; box-sizing: border-box; }
  .mask { height: 24px; margin-top: 1px; padding-left: 6px; }
  .redled { width: 8px; height: 10px; background: #f00; border: 1px solid #333; flex: none; box-sizing: content-box; border-radius: 1px; }
  .treat { height: 22px; padding-left: 7px; margin-top: 2px; }
  .btns { padding-left: 5px; gap: 6px; margin-top: 2px; height: 24px; }
  .cs { width: 162px; height: 22px; }
  .dis { color: #a0a0a0; }

  .status { height: 20px; flex: none; display: flex; align-items: center; background: #fff; position: relative; }
  .help { margin-left: 2px; width: 1311px; flex: none; font-size: 11.100px; padding-top: 2px; }
  .sicons { display: flex; width: 41px; flex: none; transform: scale(.85); }
  .sb { height: 18px; line-height: 16px; box-sizing: border-box; border: 1px solid #c0c0c0; flex: none; text-align: center; }
  .scard { width: 40px; color: #999; font-size: 10px; display: flex; flex-direction: column; align-items: center; line-height: 10px; margin-right: 3px; }
  .scard svg { display: block; }
  .sarrow { width: 15px; display: flex; align-items: center; justify-content: center; }
  .sarrow :global(svg) { width: 13px; }
  .bal { width: 53px; margin-left: 2px; font-size: 12px; }
  .bnc { width: 50px; margin-left: 3px; background: #ff0; border-color: #ff0; font-size: 12px; }
  .rate { width: 32px; margin-left: 3px; background: #f00; border-color: #f00; font-size: 7px; line-height: 7px; display: flex; flex-direction: column; justify-content: center; color: #333; }
  .cs2 { width: 16px; margin-left: 4px; }
  .zero { width: 54px; margin-left: 3px; display: flex; border: 0; }
  .zero i { flex: 1; background: #f00; }
  .zero span { width: 8px; }
  .empty { width: 54px; margin-left: 4px; background: #f0f0f0; }
  .page { width: 43.500px; height: 18px; line-height: 16px; border: 1px solid #111; border-radius: 2px; box-sizing: border-box; text-align: center; flex: none; font-size: 12px; background: #fff; }
  .page.b { font-weight: 700; }
  .first { margin-left: 4px; border-top-color: #fff; border-right-color: #fff; border-bottom-color: #fff; }
  .strip { height: 8px; flex: none; background: #5e2a6c; }
</style>
